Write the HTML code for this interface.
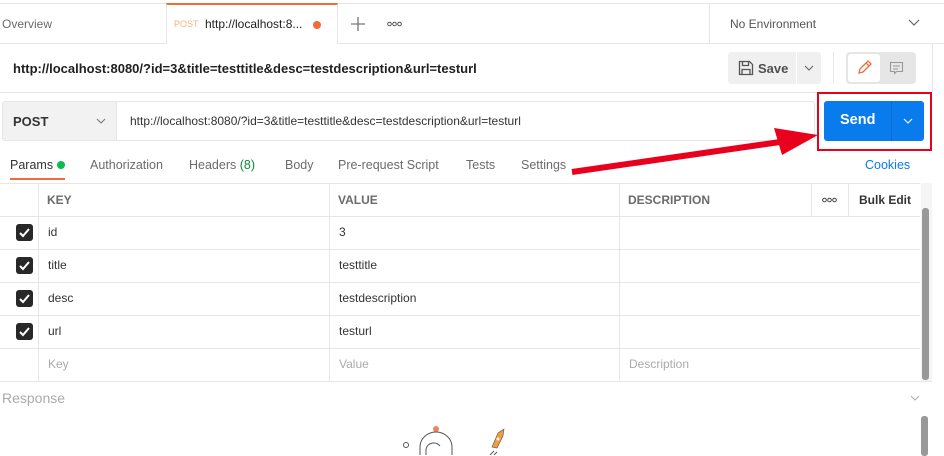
<!DOCTYPE html>
<html><head><style>
*{box-sizing:border-box;margin:0;padding:0}
body{width:944px;height:455px;overflow:hidden;background:#fff;font-family:"Liberation Sans",sans-serif;position:relative;color:#212121}
.a{position:absolute}
.t{position:absolute;white-space:nowrap}
.hl{position:absolute;height:1px;background:#e6e6e6}
.vl{position:absolute;width:1px;background:#e6e6e6}
.cb{position:absolute;left:16px;width:17px;height:17px;background:#282828;border-radius:3px}
.cb svg{position:absolute;left:2px;top:2px}
</style></head><body>
<div class="hl" style="left:0;top:3px;width:944px"></div>
<div class="hl" style="left:0;top:43px;width:944px"></div>
<div class="t" style="left:2px;top:17px;font-size:12px;color:#6b6b6b">Overview</div>
<div class="a" style="left:166px;top:3px;width:172px;height:41px;background:#fff;border-left:1px solid #e6e6e6;border-right:1px solid #e6e6e6;border-top:2px solid #f26b3a"></div>
<div class="t" style="left:174px;top:19px;font-size:9px;color:#f7b27a">POST</div>
<div class="t" style="left:205px;top:17px;font-size:12px;color:#212121">http://localhost:8...</div>
<div class="a" style="left:313px;top:21px;width:8px;height:8px;border-radius:50%;background:#f26b3a"></div>
<svg class="a" style="left:351px;top:17px" width="14" height="14"><path d="M7 0v14M0 7h14" stroke="#777" stroke-width="1.3"/></svg>
<svg class="a" style="left:387px;top:21px" width="16" height="6"><circle cx="2.5" cy="3" r="1.8" fill="none" stroke="#555"/><circle cx="7.5" cy="3" r="1.8" fill="none" stroke="#555"/><circle cx="12.5" cy="3" r="1.8" fill="none" stroke="#555"/></svg>
<div class="vl" style="left:709px;top:3px;height:40px"></div>
<div class="t" style="left:730px;top:17px;font-size:12px;color:#555">No Environment</div>
<svg class="a" style="left:908px;top:19px" width="12" height="8"><path d="M1 1l5 5 5-5" fill="none" stroke="#666" stroke-width="1.2"/></svg>
<div class="vl" style="left:932px;top:43px;height:49px"></div>
<div class="t" style="left:13px;top:61px;font-size:13px;font-weight:bold;color:#212121">http://localhost:8080/?id=3&amp;title=testtitle&amp;desc=testdescription&amp;url=testurl</div>
<div class="a" style="left:728px;top:52px;width:68px;height:32px;background:#f0f0f0;border-radius:3px 0 0 3px"></div>
<svg class="a" style="left:738px;top:60px" width="16" height="16"><path d="M1.5 1.5h10l3 3v10h-13z M4.5 1.5v4h6v-4 M4 14.5v-5h8v5" fill="none" stroke="#555" stroke-width="1.3"/></svg>
<div class="t" style="left:758px;top:61px;font-size:13px;font-weight:bold;color:#505050">Save</div>
<div class="a" style="left:797px;top:52px;width:24px;height:32px;background:#f0f0f0;border-radius:0 3px 3px 0"></div>
<svg class="a" style="left:804px;top:65px" width="10" height="7"><path d="M1 1l4 4 4-4" fill="none" stroke="#666" stroke-width="1.1"/></svg>
<div class="vl" style="left:833px;top:52px;height:31px"></div>
<div class="a" style="left:846px;top:52px;width:70px;height:32px;background:#e6e6e6;border-radius:4px"></div>
<div class="a" style="left:848px;top:54px;width:32px;height:28px;background:#fff;border-radius:3px"></div>
<svg class="a" style="left:856px;top:60px" width="16" height="16"><path d="M3 13l1-4 8-8 3 3-8 8z M10 3l3 3" fill="none" stroke="#f26b3a" stroke-width="1.3"/></svg>
<svg class="a" style="left:889px;top:61px" width="16" height="16"><path d="M1.5 1.5h12v9h-6l-2 2v-2h-4z M4 5h7 M4 8h5" fill="none" stroke="#999" stroke-width="1.1"/></svg>
<div class="hl" style="left:0;top:92px;width:932px"></div>
<div class="a" style="left:2px;top:101px;width:115px;height:40px;background:#f2f2f2;border:1px solid #e6e6e6;border-radius:3px 0 0 3px"></div>
<div class="t" style="left:13px;top:114px;font-size:13px;font-weight:bold;color:#333">POST</div>
<svg class="a" style="left:96px;top:118px" width="10" height="7"><path d="M1 1l4 4 4-4" fill="none" stroke="#777" stroke-width="1.1"/></svg>
<div class="a" style="left:117px;top:101px;width:698px;height:40px;border:1px solid #e6e6e6;border-left:none;border-radius:0 3px 3px 0"></div>
<div class="t" style="left:130px;top:114px;font-size:12px;color:#333">http://localhost:8080/?id=3&amp;title=testtitle&amp;desc=testdescription&amp;url=testurl</div>
<div class="a" style="left:824px;top:101px;width:100px;height:40px;background:#097bed;border-radius:3px"></div>
<div class="a" style="left:891px;top:101px;width:1px;height:40px;background:#0a6bd0"></div>
<div class="t" style="left:840px;top:112px;font-size:14.5px;font-weight:bold;color:#fff">Send</div>
<svg class="a" style="left:903px;top:118px" width="10" height="7"><path d="M1 1l4 4 4-4" fill="none" stroke="#fff" stroke-width="1.1"/></svg>
<div class="a" style="left:817px;top:92px;width:115px;height:59px;border:2px solid #e8001c"></div>
<div class="t" style="left:10px;top:158px;font-size:12.5px;color:#333">Params</div>
<div class="a" style="left:57px;top:161px;width:8px;height:8px;border-radius:50%;background:#0cbb52"></div>
<div class="a" style="left:10px;top:178px;width:55px;height:2px;background:#f26b3a"></div>
<div class="t" style="left:90px;top:158px;font-size:12.5px;color:#6b6b6b">Authorization</div>
<div class="t" style="left:189px;top:158px;font-size:12.5px;color:#6b6b6b">Headers <span style="color:#0a8a3a">(8)</span></div>
<div class="t" style="left:285px;top:158px;font-size:12.5px;color:#6b6b6b">Body</div>
<div class="t" style="left:338px;top:158px;font-size:12.5px;color:#6b6b6b">Pre-request Script</div>
<div class="t" style="left:466px;top:158px;font-size:12.5px;color:#6b6b6b">Tests</div>
<div class="t" style="left:521px;top:158px;font-size:12.5px;color:#6b6b6b">Settings</div>
<div class="t" style="left:865px;top:158px;font-size:12.5px;color:#097bed">Cookies</div>
<svg class="a" style="left:560px;top:120px" width="270" height="65"><path d="M12 52L220 22" stroke="#e8001c" stroke-width="6"/><path d="M214 8L258 15L222 35z" fill="#e8001c"/></svg>
<div class="hl" style="left:0;top:183px;width:920px"></div>
<div class="hl" style="left:0;top:216px;width:920px"></div>
<div class="hl" style="left:0;top:249px;width:920px"></div>
<div class="hl" style="left:0;top:282px;width:920px"></div>
<div class="hl" style="left:0;top:315px;width:920px"></div>
<div class="hl" style="left:0;top:348px;width:920px"></div>
<div class="hl" style="left:0;top:381px;width:932px"></div>
<div class="vl" style="left:38px;top:183px;height:198px"></div>
<div class="vl" style="left:329px;top:183px;height:198px"></div>
<div class="vl" style="left:619px;top:183px;height:198px"></div>
<div class="vl" style="left:811px;top:183px;height:33px"></div>
<div class="vl" style="left:848px;top:183px;height:33px"></div>
<div class="t" style="left:47px;top:193px;font-size:12px;font-weight:bold;color:#6b6b6b">KEY</div>
<div class="t" style="left:338px;top:193px;font-size:12px;font-weight:bold;color:#6b6b6b">VALUE</div>
<div class="t" style="left:628px;top:193px;font-size:12px;font-weight:bold;color:#6b6b6b">DESCRIPTION</div>
<svg class="a" style="left:822px;top:197px" width="16" height="6"><circle cx="2.5" cy="3" r="1.8" fill="none" stroke="#444"/><circle cx="7.5" cy="3" r="1.8" fill="none" stroke="#444"/><circle cx="12.5" cy="3" r="1.8" fill="none" stroke="#444"/></svg>
<div class="t" style="left:859px;top:193px;font-size:12px;font-weight:bold;color:#333">Bulk Edit</div>
<div class="cb" style="top:224px"><svg width="13" height="13"><path d="M2 7l3 3 6-7" fill="none" stroke="#fff" stroke-width="2"/></svg></div>
<div class="cb" style="top:257px"><svg width="13" height="13"><path d="M2 7l3 3 6-7" fill="none" stroke="#fff" stroke-width="2"/></svg></div>
<div class="cb" style="top:290px"><svg width="13" height="13"><path d="M2 7l3 3 6-7" fill="none" stroke="#fff" stroke-width="2"/></svg></div>
<div class="cb" style="top:323px"><svg width="13" height="13"><path d="M2 7l3 3 6-7" fill="none" stroke="#fff" stroke-width="2"/></svg></div>
<div class="t" style="left:48px;top:225px;font-size:12px;color:#333">id</div>
<div class="t" style="left:339px;top:225px;font-size:12px;color:#333">3</div>
<div class="t" style="left:48px;top:258px;font-size:12px;color:#333">title</div>
<div class="t" style="left:339px;top:258px;font-size:12px;color:#333">testtitle</div>
<div class="t" style="left:48px;top:291px;font-size:12px;color:#333">desc</div>
<div class="t" style="left:339px;top:291px;font-size:12px;color:#333">testdescription</div>
<div class="t" style="left:48px;top:324px;font-size:12px;color:#333">url</div>
<div class="t" style="left:339px;top:324px;font-size:12px;color:#333">testurl</div>
<div class="t" style="left:48px;top:357px;font-size:12px;color:#aaa">Key</div>
<div class="t" style="left:339px;top:357px;font-size:12px;color:#aaa">Value</div>
<div class="t" style="left:629px;top:357px;font-size:12px;color:#aaa">Description</div>
<div class="a" style="left:921px;top:183px;width:11px;height:198px;background:#f5f5f5"></div>
<div class="a" style="left:922px;top:208px;width:7px;height:172px;background:#999;border-radius:3px"></div>
<div class="t" style="left:2px;top:390px;font-size:14px;color:#aaa">Response</div>
<svg class="a" style="left:910px;top:395px" width="10" height="7"><path d="M1 1l4 4 4-4" fill="none" stroke="#aaa" stroke-width="1"/></svg>
<div class="a" style="left:921px;top:416px;width:7px;height:40px;background:#999;border-radius:3px"></div>
<svg class="a" style="left:400px;top:425px" width="130" height="30"><circle cx="6" cy="20" r="2.5" fill="none" stroke="#555"/><circle cx="36" cy="4" r="3" fill="#f0845a"/><path d="M20 30V22a16 15 0 0 1 32 0v8" fill="none" stroke="#555"/><path d="M26 30v-6a8 8 0 0 1 14-3" fill="none" stroke="#555"/><path d="M92 22l6-14 6-4-1 7-6 12z" fill="#f59a3c" stroke="#555" stroke-width="0.6"/><circle cx="98" cy="14" r="1.5" fill="#fff"/><path d="M94 26l-4 4 M97 27l-3 3" stroke="#555"/></svg>
</body></html>
